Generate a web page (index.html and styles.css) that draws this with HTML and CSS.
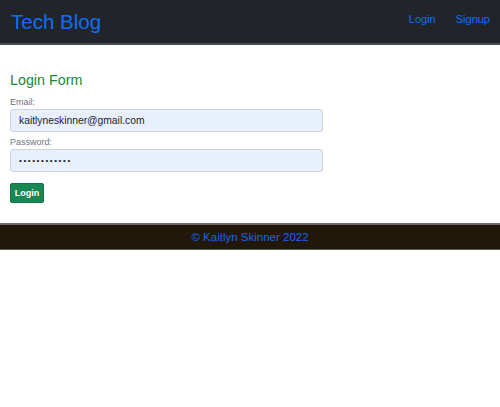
FILE: index.html
```html
<!DOCTYPE html>
<html>
<head>
<meta charset="utf-8">
<link rel="stylesheet" href="styles.css">
</head>
<body>
<header class="topbar">
  <a class="brand" href="#">Tech Blog</a>
  <nav class="nav">
    <a href="#">Login</a>
    <a href="#">Signup</a>
  </nav>
</header>
<main class="content">
  <h2 class="title">Login Form</h2>
  <form class="form">
    <label class="label">Email:</label>
    <div class="input">kaitlyneskinner@gmail.com</div>
    <label class="label">Password:</label>
    <div class="input pw">••••••••••••</div>
    <button type="button" class="btn">Login</button>
  </form>
</main>
<footer class="footer">© Kaitlyn Skinner 2022</footer>
</body>
</html>
```
FILE: styles.css
```css
html, body { margin: 0; padding: 0; background: #fff; }
body { font-family: "Liberation Sans", Arial, sans-serif; }
a { text-decoration: none; }
.topbar {
  height: 43px;
  background: #212529;
  border-bottom: 2px solid #4a4d51;
  display: flex;
  align-items: center;
  justify-content: space-between;
  padding: 0 10px 0 11px;
}
.brand { color: #0d6efd; font-size: 20.5px; margin-top: 1px; }
.nav { display: flex; gap: 20px; margin-top: -6px; }
.nav a { color: #0d6efd; font-size: 11px; }
.content { padding: 27px 10px 20px; }
.title { margin: 0 0 9px; font-weight: normal; font-size: 14.3px; color: #198733; }
.form { display: flex; flex-direction: column; width: 313px; }
.label { font-size: 9px; color: #6c757d; margin-bottom: 2px; }
.input {
  height: 23px;
  box-sizing: border-box;
  background: #e8f0fe;
  border: 1px solid #ced4da;
  border-radius: 3px;
  font-size: 10.3px;
  color: #212529;
  padding: 0 8px;
  line-height: 21px;
  margin-bottom: 5px;
}
.pw { letter-spacing: 1.6px; font-size: 8px; margin-bottom: 11px; }
.btn {
  align-self: flex-start;
  background: #198754;
  color: #fff;
  border: 1px solid #157347;
  border-radius: 2px;
  font: bold 9px "Liberation Sans", Arial, sans-serif;
  height: 20px;
  width: 34px;
  padding: 0;
}
.footer {
  background: #21170a;
  border-top: 2px solid #6a6a6a;
  border-bottom: 1px solid #555;
  height: 24px;
  display: flex;
  align-items: center;
  justify-content: center;
  color: #1565f0;
  font-size: 11.5px;
}
```
